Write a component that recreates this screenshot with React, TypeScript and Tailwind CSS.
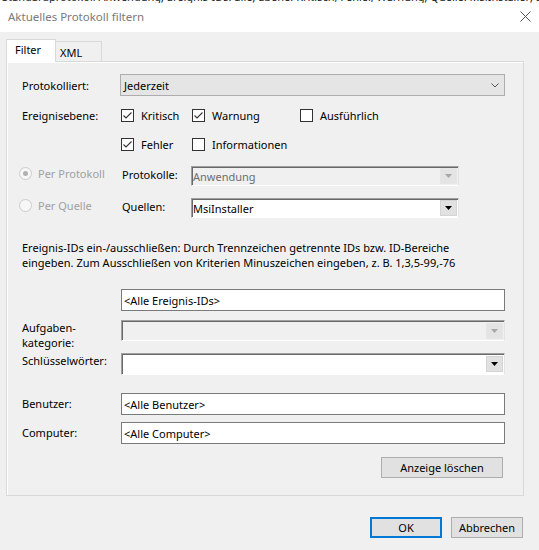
import React from 'react';

// Windows-style "Aktuelles Protokoll filtern" dialog

function Check({ label, checked, className = '' }: { label: string; checked?: boolean; className?: string }) {
  return (
    <div className={`flex items-center gap-[7px] ${className}`}>
      <div className="flex h-[13px] w-[13px] items-center justify-center border border-[#333333] bg-white">
        {checked && (
          <svg width="11" height="11" viewBox="0 0 11 11">
            <polyline points="1.5,5.5 4,8 9.5,2.5" fill="none" stroke="#333333" strokeWidth="1.1" />
          </svg>
        )}
      </div>
      <span>{label}</span>
    </div>
  );
}

function Radio({ label, checked, className = '' }: { label: string; checked?: boolean; className?: string }) {
  return (
    <div className={`flex items-center gap-[6px] text-[#a0a0a0] ${className}`}>
      <div className="flex h-[13px] w-[13px] items-center justify-center rounded-full border border-[#cccccc] bg-[#f7f7f7]">
        {checked && <div className="h-[5px] w-[5px] rounded-full bg-[#b0b0b0]" />}
      </div>
      <span>{label}</span>
    </div>
  );
}

function Triangle({ disabled }: { disabled?: boolean }) {
  return (
    <svg width="7" height="4" viewBox="0 0 7 4">
      <polygon points="0,0 7,0 3.5,4" fill={disabled ? '#a8a8a8' : '#000000'} />
    </svg>
  );
}

// old sunken combobox with 3D drop button
function OldCombo({ value = '', disabled, className = '', h = 'h-[20px]' }: { value?: string; disabled?: boolean; className?: string; h?: string }) {
  return (
    <div
      className={`flex items-center border border-[#a0a0a0] border-r-[#e3e3e3] border-b-white shadow-[inset_1px_1px_0_#696969] ${h} ${
        disabled ? 'bg-[#f0f0f0]' : 'bg-white'
      } ${className}`}
    >
      <span className={`flex-1 pl-[1px] ${disabled ? 'text-[#6d6d6d]' : 'text-black'}`}>{value}</span>
      <div
        className={`mr-[1px] flex h-[16px] w-[17px] items-center justify-center border ${
          disabled ? 'border-[#e6e6e6] bg-[#e4e4e4]' : 'border-[#d4d4d4] bg-[#e1e1e1]'
        }`}
      >
        <Triangle disabled={disabled} />
      </div>
    </div>
  );
}

function TextBox({ value }: { value: string }) {
  return (
    <div className="flex h-[22px] w-[384px] items-center border border-[#7a7a7a] bg-white pl-[2px]">{value}</div>
  );
}

export default function App() {
  return (
    <div className="relative h-[550px] w-[539px] overflow-hidden bg-[#f0f0f0] font-['Noto_Sans',sans-serif] text-[11px] leading-[15px] text-black">
      {/* window behind, only a sliver visible */}
      <div className="h-[3px] overflow-hidden bg-white">
        <div className="-mt-[11px] whitespace-nowrap pl-[2px] text-[#222]">
          Standardprotokoll Anwendung; Ereignis-IDs: alle; Ebene: Kritisch, Fehler, Warnung; Quelle: MsiInstaller; Benutzer: alle Benutzer, Computer: alle
        </div>
      </div>

      {/* title bar */}
      <div className="flex h-[29px] items-center justify-between bg-white pb-[2px] pl-[8px] pr-[8px]">
        <span className="text-[11.5px] text-[#7a7a7a]">Aktuelles Protokoll filtern</span>
        <svg width="11" height="11" viewBox="0 0 11 11">
          <path d="M0.5 0.5 L10.5 10.5 M10.5 0.5 L0.5 10.5" stroke="#555" strokeWidth="1" />
        </svg>
      </div>

      <div className="px-[6px] pt-[7px]">
        {/* tabs */}
        <div className="flex h-[22px] items-end">
          <div className="relative z-10 -mb-px flex h-[23px] w-[50px] items-start border border-b-0 border-[#d9d9d9] bg-white pl-[8px] pt-[2px]">
            Filter
          </div>
          <div className="flex h-[20px] w-[46px] items-start border border-b-0 border-l-0 border-[#d9d9d9] bg-[#f0f0f0] pl-[4px] pt-[3px]">
            XML
          </div>
        </div>

        {/* panel */}
        <div className="h-[435px] w-[518px] border border-[#d9d9d9] pl-[15px] shadow-[inset_1px_1px_0_#ffffff]">
          <div className="flex w-[483px] flex-col">
            <div className="mt-[12px] flex h-[22px] items-center">
              <span className="w-[98px]">Protokolliert:</span>
              <div className="flex h-[22px] w-[385px] items-center justify-between border border-[#adadad] bg-[#e5e5e5] pl-[3px] pr-[5px]">
                <span>Jederzeit</span>
                <svg width="8" height="5" viewBox="0 0 8 5">
                  <polyline points="0.5,0.5 4,4 7.5,0.5" fill="none" stroke="#555" strokeWidth="1" />
                </svg>
              </div>
            </div>

            <div className="mt-[9px] flex h-[20px] items-center">
              <span className="w-[99px]">Ereignisebene:</span>
              <Check label="Kritisch" checked className="w-[71px]" />
              <Check label="Warnung" checked className="w-[108px]" />
              <Check label="Ausführlich" />
            </div>

            <div className="mt-[9px] flex h-[20px] items-center">
              <span className="w-[99px]" />
              <Check label="Fehler" checked className="w-[71px]" />
              <Check label="Informationen" />
            </div>

            <div className="-ml-[3px] mt-[12px] flex h-[20px] items-center">
              <Radio label="Per Protokoll" checked className="mb-[6px] w-[103px]" />
              <span className="mb-[3px] w-[69px]">Protokolle:</span>
              <OldCombo value="Anwendung" disabled className="w-[268px]" />
            </div>

            <div className="-ml-[3px] mt-[12px] flex h-[20px] items-center">
              <Radio label="Per Quelle" className="mb-[6px] w-[103px]" />
              <span className="mb-[3px] w-[69px]">Quellen:</span>
              <OldCombo value="MsiInstaller" className="w-[268px]" />
            </div>

            <p className="mt-[22px]">
              Ereignis-IDs ein-/ausschließen: Durch Trennzeichen getrennte IDs bzw. ID-Bereiche
              <br />
              eingeben. Zum Ausschließen von Kriterien Minuszeichen eingeben, z. B. 1,3,5-99,-76
            </p>

            <div className="mt-[19px] flex">
              <span className="w-[99px]" />
              <TextBox value="<Alle Ereignis-IDs>" />
            </div>

            <div className="mt-[9px] flex items-start">
              <span className="w-[99px]">
                Aufgaben-
                <br />
                kategorie:
              </span>
              <OldCombo disabled className="w-[384px]" h="h-[21px]" />
            </div>

            <div className="mt-[3px] flex items-start">
              <span className="w-[99px]">Schlüsselwörter:</span>
              <OldCombo className="w-[384px]" h="h-[22px]" />
            </div>

            <div className="mt-[18px] flex items-center">
              <span className="mb-[2px] w-[99px]">Benutzer:</span>
              <TextBox value="<Alle Benutzer>" />
            </div>

            <div className="mt-[7px] flex items-center">
              <span className="mb-[2px] w-[99px]">Computer:</span>
              <TextBox value="<Alle Computer>" />
            </div>

            <div className="mt-[13px] flex justify-end pr-[2px]">
              <button className="h-[21px] w-[122px] border border-[#adadad] bg-[#e1e1e1]">Anzeige löschen</button>
            </div>
          </div>
        </div>
      </div>

      {/* dialog buttons */}
      <div className="mt-[21px] flex justify-end gap-[9px] pr-[16px]">
        <button className="h-[21px] w-[72px] border-2 border-[#0078d7] bg-[#e1e1e1]">OK</button>
        <button className="h-[21px] w-[72px] border border-[#adadad] bg-[#e1e1e1]">Abbrechen</button>
      </div>
    </div>
  );
}
